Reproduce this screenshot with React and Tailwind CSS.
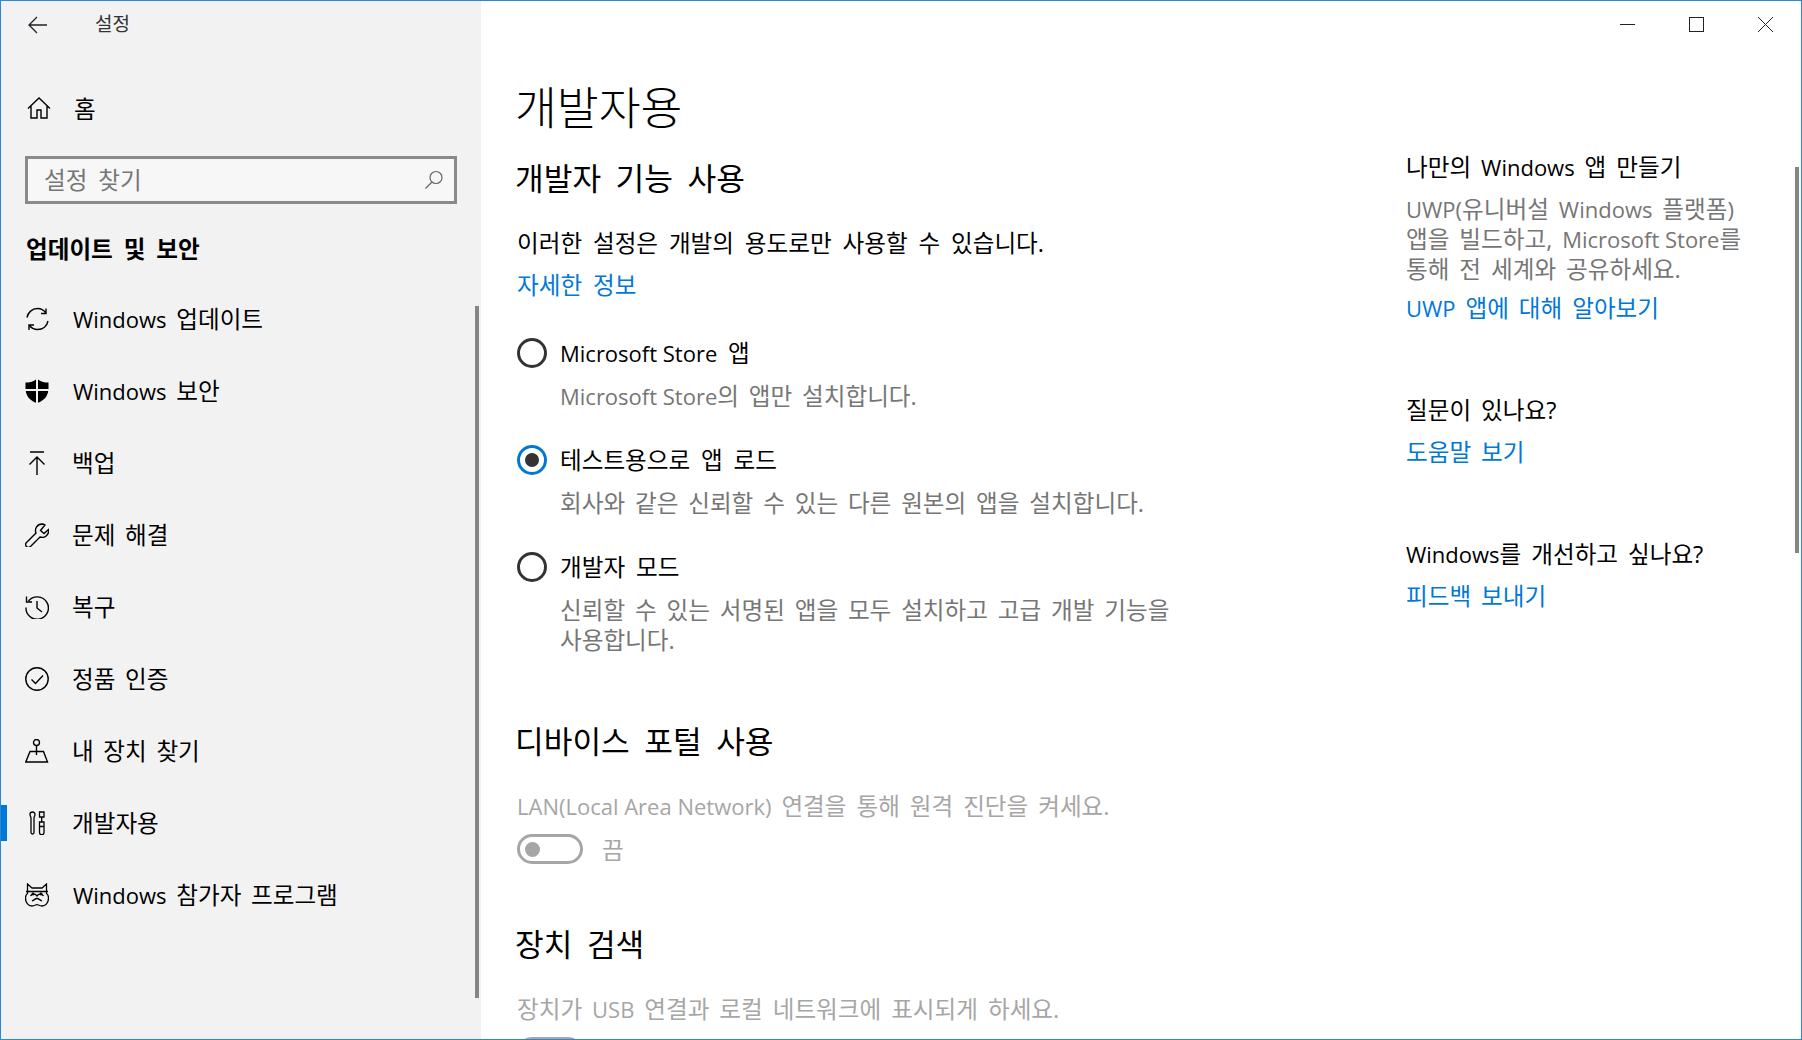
import React from 'react';

const HomeIcon = () => (
    <svg width="24" height="24" viewBox="0 0 24 24" fill="none" stroke="#000" strokeWidth="1.4">
        <path d="M1 12.500 12 2l11 10.500M4 10v12h6v-8h4v8h6V10" />
    </svg>
);
const UpdateIcon = () => (
    <svg width="24" height="24" viewBox="0 0 24 24" fill="none" stroke="#000" strokeWidth="1.4">
        <path d="M2 10.500C3 5.500 7 1.500 12.500 1.500c3.500 0 6.500 1.800 8.500 4.500M21 1.500V6.500h-5" />
        <path d="M23 14c-1 5-5 8.500-10.500 8.500-3.500 0-6.500-1.800-8.500-4.500M4 23v-5h5" />
    </svg>
);
const ShieldIcon = () => (
    <svg width="24" height="24" viewBox="0 0 24 24" fill="#000">
        <path d="M11 0.500C8 3 4 3.500 0.500 3.500V10H11ZM13 0.500C16 3 20 3.500 23.500 3.500V10H13ZM0.800 12H11v11.800C6 22 1.500 18 0.800 12ZM13 12h10.200C22.500 18 18 22 13 23.800Z" />
    </svg>
);
const BackupIcon = () => (
    <svg width="24" height="24" viewBox="0 0 24 24" fill="none" stroke="#000" strokeWidth="1.4">
        <path d="M5 1h14M12 24V6M4.500 13.500 12 6l7.500 7.500" />
    </svg>
);
const WrenchIcon = () => (
    <svg width="24" height="24" viewBox="0 0 24 24" fill="none" stroke="#000" strokeWidth="1.4">
        <path d="M17 1a6.500 6.500 0 0 0-6 9L1.500 19.500a2.800 2.800 0 0 0 4 4L15 14a6.500 6.500 0 0 0 8.500-7.500L19 10.500 15.500 7.500 20 2a6.500 6.500 0 0 0-3-1Z" />
    </svg>
);
const HistoryIcon = () => (
    <svg width="24" height="24" viewBox="0 0 24 24" fill="none" stroke="#000" strokeWidth="1.4">
        <path d="M3.500 6A11.200 11.200 0 1 1 1 12.500M1.500 1.500V7h5.500M12 6v7l5 4" />
    </svg>
);
const ActivationIcon = () => (
    <svg width="24" height="24" viewBox="0 0 24 24" fill="none" stroke="#000" strokeWidth="1.400">
        <circle cx="12" cy="12" r="11.200" />
        <path d="M6.500 12.500 10.500 16.500 18 8.500" />
    </svg>
);
const FindIcon = () => (
    <svg width="24" height="24" viewBox="0 0 24 24" fill="none" stroke="#000" strokeWidth="1.4">
        <circle cx="11.500" cy="3.500" r="3" />
        <path d="M11.500 6.500V16M5 12.500h13.500L22.500 23H0.800L5 12.500Z" />
    </svg>
);
const DevIcon = () => (
    <svg width="24" height="24" viewBox="0 0 24 24" fill="none" stroke="#000" strokeWidth="1.3">
        <path d="M7.500 1C6 1 5 2 5 3.500S6 6 6 7v14.500a1.500 1.500 0 0 0 3 0V7c0-1 1-2 1-3.500S9 1 7.500 1Z" />
        <path d="M14.500 1h4.500v5h-4.500ZM16.700 6v5M14.500 11h4.500v10.500a2.200 2.200 0 0 1-4.500 0ZM14.500 15.500h4.500" />
    </svg>
);
const InsiderIcon = () => (
    <svg width="24" height="24" viewBox="0 0 24 24" fill="none" stroke="#000" strokeWidth="1.3">
        <path d="M2.500 1 7 5h10l4.500-4v9.500c1.500 1 2 2.500 2 4.500 0 5-3 8-6.500 8-2 0-3.500-1-5-1.500-1.500.5-3 1.500-5 1.500-3.500 0-6.500-3-6.500-8 0-2 .5-3.500 2-4.500Z" />
        <path d="M1 8.500h22M5.500 13a3.500 3 0 0 1 6.500 0 3.500 3 0 0 1 6.500 0M7 18c2-1 3.500-2.500 5-2.500S15 17 17 18" />
        <circle cx="8" cy="11" r="0.800" fill="#000" />
        <circle cx="16" cy="11" r="0.800" fill="#000" />
    </svg>
);

// latin runs are set a little smaller than the hangul around them
const En = ({ children }) => <span className="text-[22px] [word-spacing:0px]">{children}</span>;

const navItems = [
    { label: <><En>Windows</En> 업데이트</>, icon: <UpdateIcon /> },
    { label: <><En>Windows</En> 보안</>, icon: <ShieldIcon /> },
    { label: '백업', icon: <BackupIcon /> },
    { label: '문제 해결', icon: <WrenchIcon /> },
    { label: '복구', icon: <HistoryIcon /> },
    { label: '정품 인증', icon: <ActivationIcon /> },
    { label: '내 장치 찾기', icon: <FindIcon /> },
    { label: '개발자용', icon: <DevIcon />, active: true },
    { label: <><En>Windows</En> 참가자 프로그램</>, icon: <InsiderIcon /> },
];

function Radio({ checked, label, description }) {
    return (
        <div>
            <div className="flex items-center h-[30px] gap-[13px]">
                <span className={`w-[30px] h-[30px] rounded-full border-[3px] flex items-center justify-center ${checked ? 'border-[#0078d7]' : 'border-[#333333]'}`}>
                    {checked && <span className="w-[14px] h-[14px] rounded-full bg-[#333333]" />}
                </span>
                <span className="text-black pt-[2px]">{label}</span>
            </div>
            <p className="mt-[13px] ml-[43px] w-[620px] leading-[30px] [word-spacing:3.7px] text-[#767676] [word-break:keep-all]">{description}</p>
        </div>
    );
}

export default function App() {
    return (
        <div className="relative w-[1802px] h-[1040px] overflow-hidden flex bg-white border border-[#2b88d8] font-['Open_Sans','Noto_Sans_CJK_KR',sans-serif] text-[23.6px] [word-spacing:4.7px] text-black">
            {/* Sidebar */}
            <aside className="relative w-[480px] shrink-0 bg-[#f2f2f2]">
                <div className="flex items-center h-[47px] pl-[27px]">
                    <svg width="20" height="18" viewBox="0 0 20 18" fill="none" stroke="#222" strokeWidth="1.3">
                        <path d="M19 9H1.500M9 1 1 9l8 8" />
                    </svg>
                    <span className="ml-[47px] text-[19px] text-[#333333]">설정</span>
                </div>
                <div className="flex items-center h-[72px] mt-[24px] pl-[26px] gap-[23px]">
                    <HomeIcon />
                    <span className="pt-[4px]">홈</span>
                </div>
                <div className="mt-[12px] ml-[24px] w-[432px] h-[48px] border-[3px] border-[#8a8a8a] bg-[#f7f7f7] flex items-center justify-between pl-[16px] pr-[10px]">
                    <span className="text-[#767676] pt-[2px]">설정 찾기</span>
                    <svg width="20" height="20" viewBox="0 0 20 20" fill="none" stroke="#666" strokeWidth="1.2">
                        <circle cx="12" cy="7.500" r="6" />
                        <path d="M8 12 1.500 18.500" />
                    </svg>
                </div>
                <h2 className="mt-[22px] ml-[25px] h-[46px] leading-[46px] font-bold">업데이트 및 보안</h2>
                <nav className="mt-[11px] [word-spacing:3.5px]">
                    {navItems.map((item, i) => (
                        <div key={i} className="relative flex items-center h-[72px] pl-[24px] gap-[24px]">
                            {item.active && <span className="absolute left-0 top-[18px] w-[6px] h-[36px] bg-[#0078d7]" />}
                            {item.icon}
                            <span className={typeof item.label === 'string' ? 'pt-[2px] -ml-[1px]' : 'pt-[2px]'}>{item.label}</span>
                        </div>
                    ))}
                </nav>
                <span className="absolute right-[2px] top-[305px] w-[4px] h-[692px] bg-[#858585]" />
            </aside>

            {/* Main */}
            <main className="relative flex-1 flex flex-col min-w-0">
                <div className="flex justify-end items-center shrink-0 h-[47px] pr-[28px] gap-[54px]">
                    <span className="w-[15px] h-[1px] bg-[#222]" />
                    <span className="w-[15px] h-[15px] border border-[#222]" />
                    <svg width="15" height="15" viewBox="0 0 15 15" fill="none" stroke="#222" strokeWidth="1">
                        <path d="M0 0l15 15M15 0 0 15" />
                    </svg>
                </div>
                <div className="flex">
                    <section className="w-[925px] shrink-0 pl-[36px]">
                        <h1 className="mt-[27px] h-[60px] pt-[2px] leading-[60px] text-[45.5px] -ml-[2px] font-light">개발자용</h1>
                        <h2 className="mt-[23px] h-[40px] leading-[40px] text-[31.2px] [word-spacing:6.4px] -ml-[2px]">개발자 기능 사용</h2>
                        <p className="mt-[30px] leading-[30px]">이러한 설정은 개발의 용도로만 사용할 수 있습니다.</p>
                        <p className="mt-[12px] leading-[30px] text-[#0078d7]">자세한 정보</p>
                        <div className="mt-[38px]">
                            <Radio label={<><En>Microsoft Store</En> 앱</>} description={<><En>Microsoft Store</En>의 앱만 설치합니다.</>} />
                        </div>
                        <div className="mt-[34px]">
                            <Radio checked label="테스트용으로 앱 로드" description="회사와 같은 신뢰할 수 있는 다른 원본의 앱을 설치합니다." />
                        </div>
                        <div className="mt-[34px]">
                            <Radio label="개발자 모드" description="신뢰할 수 있는 서명된 앱을 모두 설치하고 고급 개발 기능을 사용합니다." />
                        </div>
                        <h2 className="mt-[66px] h-[40px] leading-[40px] text-[31.2px] [word-spacing:6.4px] -ml-[2px]">디바이스 포털 사용</h2>
                        <p className="mt-[30px] leading-[30px] [word-spacing:3.800px] text-[#a6a6a6]"><En>LAN(Local Area Network)</En> 연결을 통해 원격 진단을 켜세요.</p>
                        <div className="mt-[13px] flex items-center h-[30px] gap-[19px]">
                            <span className="w-[66px] h-[30px] rounded-full border-[3px] border-[#a6a6a6] flex items-center pl-[5px]">
                                <span className="w-[15px] h-[15px] rounded-full bg-[#a6a6a6]" />
                            </span>
                            <span className="text-[#a6a6a6] pt-[4px]">끔</span>
                        </div>
                        <h2 className="mt-[60px] h-[40px] leading-[40px] text-[31.2px] [word-spacing:6.4px] -ml-[2px]">장치 검색</h2>
                        <p className="mt-[30px] leading-[30px] [word-spacing:3.800px] text-[#a6a6a6]">장치가 <En>USB</En> 연결과 로컬 네트워크에 표시되게 하세요.</p>
                        <div className="mt-[13px] w-[66px] h-[30px] rounded-full border-[3px] border-[#a6a6a6]" />
                    </section>
                    <section className="flex-1 min-w-0 [word-spacing:3.800px]">
                        <p className="mt-[104px] leading-[30px]">나만의 <En>Windows</En> 앱 만들기</p>
                        <p className="mt-[12px] leading-[30px] w-[345px] text-[#767676] [word-break:keep-all]"><En>UWP(</En>유니버설 <En>Windows</En> 플랫폼<En>)</En> 앱을 빌드하고, <En>Microsoft Store</En>를 통해 전 세계와 공유하세요.</p>
                        <p className="mt-[9px] leading-[30px] text-[#0078d7]"><En>UWP</En> 앱에 대해 알아보기</p>
                        <p className="mt-[72px] leading-[30px]">질문이 있나요?</p>
                        <p className="mt-[12px] leading-[30px] text-[#0078d7]">도움말 보기</p>
                        <p className="mt-[72px] leading-[30px]"><En>Windows</En>를 개선하고 싶나요?</p>
                        <p className="mt-[12px] leading-[30px] text-[#0078d7]">피드백 보내기</p>
                    </section>
                </div>
                <span className="absolute right-[2px] top-[166px] w-[4px] h-[386px] bg-[#858585]" />
            </main>
        </div>
    );
}
